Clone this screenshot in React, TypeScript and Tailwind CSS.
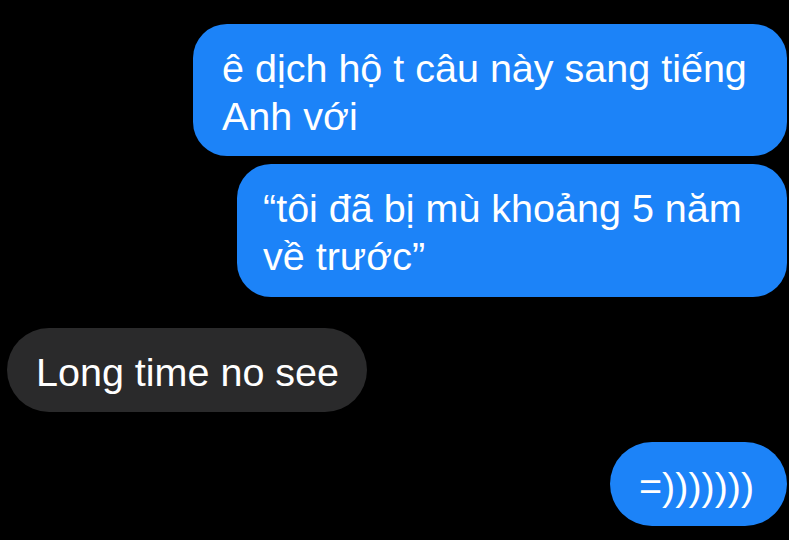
import React from "react";

const font = { fontFamily: '"Liberation Sans", Arial, sans-serif' };

export default function App() {
  return (
    <div
      className="w-[789px] h-[540px] bg-black overflow-hidden flex flex-col text-white text-[39.5px] leading-[48px]"
      style={font}
    >
      <div className="flex justify-end pr-[2px] pt-[24px]">
        <div className="w-[594px] h-[132px] bg-[#1c83f8] rounded-[34px] pl-[29px] pt-[20px] pb-[16px] whitespace-nowrap">
          ê dịch hộ t câu này sang tiếng
          <br />
          Anh với
        </div>
      </div>
      <div className="flex justify-end pr-[2px] pt-[8px]">
        <div className="w-[550px] h-[133px] bg-[#1c83f8] rounded-[34px] pl-[26px] pt-[20px] pb-[16px] whitespace-nowrap">
          “tôi đã bị mù khoảng 5 năm
          <br />
          về trước”
        </div>
      </div>
      <div className="flex justify-start pl-[7px] pt-[31px]">
        <div className="w-[360px] h-[84px] bg-[#2a2a2b] rounded-[42px] pl-[29px] pt-[20px] pb-[16px] whitespace-nowrap">
          Long time no see
        </div>
      </div>
      <div className="flex justify-end pr-[2px] pt-[30px]">
        <div className="w-[177px] h-[84px] bg-[#1c83f8] rounded-[42px] pl-[29px] pt-[20px] pb-[16px] whitespace-nowrap">
          =)))))))
        </div>
      </div>
    </div>
  );
}
